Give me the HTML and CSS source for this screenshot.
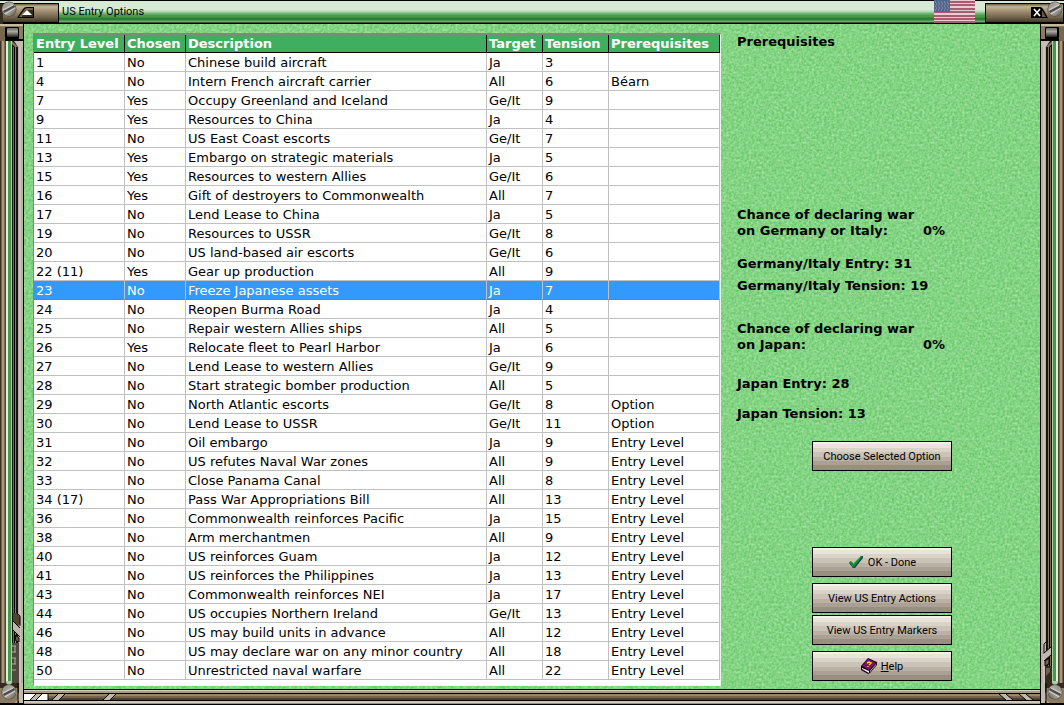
FILE: index.html
```
<!DOCTYPE html>
<html lang="en">
<head>
  <meta charset="UTF-8">
  <meta name="viewport" content="width=device-width, initial-scale=1.0">
  <title>US Entry Options</title>
  <link rel="stylesheet" href="styles.css">
</head>
<body>
  <!-- Shared gradients and the screw head used in every corner -->
  <svg class="defs" width="0" height="0" aria-hidden="true">
    <defs>
      <linearGradient id="bronze" x1="0" y1="0" x2="0" y2="1">
        <stop offset="0" stop-color="#6b5e44"/>
        <stop offset="0.15" stop-color="#c4b496"/>
        <stop offset="0.4" stop-color="#9f8f71"/>
        <stop offset="0.75" stop-color="#6f614a"/>
        <stop offset="1" stop-color="#42382a"/>
      </linearGradient>
      <linearGradient id="steel" x1="0" y1="0" x2="1" y2="1">
        <stop offset="0" stop-color="#8b8780"/>
        <stop offset="0.5" stop-color="#b3b0a9"/>
        <stop offset="1" stop-color="#5d5a54"/>
      </linearGradient>
      <linearGradient id="knob" x1="0" y1="0" x2="0" y2="1">
        <stop offset="0" stop-color="#6d6964"/>
        <stop offset="0.4" stop-color="#aaa6a0"/>
        <stop offset="1" stop-color="#24211e"/>
      </linearGradient>
      <symbol id="screw" viewBox="0 0 16 16">
        <circle cx="8" cy="8" r="7.5" fill="#4a4338"/>
        <circle cx="8" cy="8" r="7" fill="url(#steel)"/>
        <path d="M2 10L13 4L14 6L3 12Z" fill="#4b4a49"/>
        <path d="M2 9L12 4" stroke="#d6d4cf"/>
        <path d="M4 13L14 7" stroke="#d6d4cf"/>
      </symbol>
    </defs>
  </svg>

  <div class="window">
    <header class="titlebar">
      <button class="corner" aria-label="Roll up">
        <svg width="59" height="24" viewBox="0 0 59 24">
          <rect width="59" height="24" fill="#000"/>
          <rect y="1" width="59" height="2" fill="#d3e8d3"/>
          <rect x="1" y="4" width="57" height="18" fill="url(#bronze)"/>
          <rect x="0" y="4" width="3" height="20" fill="#372e20"/>
          <path d="M17 18L23 9Q24 7 27 7H34V18Z" fill="#000"/>
          <path d="M19 17L24 10Q25 8 27 8H33V17Z" fill="#77684f"/>
          <path d="M22 16L25 11Q26 10 28 10H33V17H22Z" fill="#352b1e"/>
          <path d="M22 15L27 10L32 15Z" fill="#fff"/>
          <use href="#screw" x="1" y="1" width="16" height="16"/>
        </svg>
      </button>
      <h1>US Entry Options</h1>
      <svg class="flag" width="41" height="23" viewBox="0 0 41 23" role="img" aria-label="United States">
        <rect width="41" height="23" fill="#e5cdd2"/>
        <path d="M0 2H41M0 5H41M0 9H41M0 12H41M0 16H41M0 19H41M0 22H41" stroke="#a95b70" stroke-width="2"/>
        <rect width="16" height="12" fill="#52658c"/>
        <path d="M1 2H16M1 6H16M1 10H16" stroke="#9aa9c4" stroke-dasharray="1 2"/>
        <path d="M2 4H16M2 8H16" stroke="#9aa9c4" stroke-dasharray="1 2"/>
      </svg>
      <button class="corner" aria-label="Close">
        <svg width="79" height="24" viewBox="0 0 79 24">
          <rect width="79" height="24" fill="#000"/>
          <rect y="1" width="79" height="2" fill="#d3e8d3"/>
          <rect x="1" y="4" width="77" height="18" fill="url(#bronze)"/>
          <path d="M46 7H55Q57 7 58 9L63 18H46Z" fill="#000"/>
          <path d="M57 10L61 17H57Z" fill="#655740"/>
          <path d="M49 9L55 16M55 9L49 16" stroke="#fff" stroke-width="1.6"/>
          <use href="#screw" x="62" y="1" width="16" height="16"/>
        </svg>
      </button>
    </header>

    <div class="rail rail-left">
      <svg width="24" height="17" viewBox="0 0 24 17">
        <rect width="24" height="17" fill="#000"/>
        <rect width="23" height="15" fill="#8b7b61"/>
        <rect width="23" height="2" fill="#c6b99f"/>
        <path d="M0 3H5V17H0Z" fill="#75664c"/>
        <rect x="5" y="3" width="14" height="12" rx="1" fill="#000"/>
        <rect x="7" y="4" width="11" height="9" rx="1" fill="url(#knob)"/>
      </svg>
      <svg width="24" height="6" viewBox="0 0 24 6">
        <rect x="12" width="12" height="6" fill="#17130e"/>
        <path d="M14 0H23V6H18Z" fill="#c7bdb1"/>
        <path d="M12 0L18 6H15L12 3Z" fill="#877961"/>
      </svg>
      <div class="rail-fill"></div>
      <svg width="24" height="92" viewBox="0 0 24 92">
        <path d="M13 0H17L20 4V11L17 14L13 10Z" fill="#51432f"/>
        <path d="M17 0L20 3V13" fill="none" stroke="#000"/>
        <path d="M13 8L20 15V24L13 17Z" fill="#c0b6a9"/>
        <path d="M13 8L20 15M13 17L20 24" stroke="#000"/>
        <path d="M15 22L19 25V29L16 28Z" fill="#75664c" stroke="#000"/>
        <rect x="12" y="30" width="7" height="43" fill="#4f493f"/>
        <path d="M12 33H16M12 39H16M12 45H16M12 51H16M12 57H16" stroke="#b5ab9b" stroke-width="1"/>
        <path d="M15 33V39M15 45V51" stroke="#b5ab9b"/>
        <path d="M0 70H19V92H0Z" fill="#342b1e"/>
        <path d="M6 68H12V70Q9 74 6 70Z" fill="#aacda9"/>
        <path d="M0 75H18V92H0Z" fill="#8b7b61"/>
        <path d="M14 77L19 82V86L15 91" fill="none" stroke="#b3a283" stroke-width="2"/>
        <path d="M18 70V92" stroke="#000"/>
        <path d="M19 70H23V92H19Z" fill="#c4bbb0"/>
        <use href="#screw" x="1" y="71" width="16" height="16"/>
        <path d="M0 91H24" stroke="#000" stroke-width="2"/>
      </svg>
    </div>

    <main class="content">
      <div class="grid-box">
        <table class="options">
          <colgroup>
            <col class="col-level"><col class="col-chosen"><col class="col-desc"><col class="col-target"><col class="col-tension"><col class="col-prereq">
          </colgroup>
          <thead>
            <tr><th>Entry Level</th><th>Chosen</th><th>Description</th><th>Target</th><th>Tension</th><th>Prerequisites</th></tr>
          </thead>
          <tbody>
            <tr><td>1</td><td>No</td><td>Chinese build aircraft</td><td>Ja</td><td>3</td><td></td></tr>
            <tr><td>4</td><td>No</td><td>Intern French aircraft carrier</td><td>All</td><td>6</td><td>Béarn</td></tr>
            <tr><td>7</td><td>Yes</td><td>Occupy Greenland and Iceland</td><td>Ge/It</td><td>9</td><td></td></tr>
            <tr><td>9</td><td>Yes</td><td>Resources to China</td><td>Ja</td><td>4</td><td></td></tr>
            <tr><td>11</td><td>No</td><td>US East Coast escorts</td><td>Ge/It</td><td>7</td><td></td></tr>
            <tr><td>13</td><td>Yes</td><td>Embargo on strategic materials</td><td>Ja</td><td>5</td><td></td></tr>
            <tr><td>15</td><td>Yes</td><td>Resources to western Allies</td><td>Ge/It</td><td>6</td><td></td></tr>
            <tr><td>16</td><td>Yes</td><td>Gift of destroyers to Commonwealth</td><td>All</td><td>7</td><td></td></tr>
            <tr><td>17</td><td>No</td><td>Lend Lease to China</td><td>Ja</td><td>5</td><td></td></tr>
            <tr><td>19</td><td>No</td><td>Resources to USSR</td><td>Ge/It</td><td>8</td><td></td></tr>
            <tr><td>20</td><td>No</td><td>US land-based air escorts</td><td>Ge/It</td><td>6</td><td></td></tr>
            <tr><td>22 (11)</td><td>Yes</td><td>Gear up production</td><td>All</td><td>9</td><td></td></tr>
            <tr class="selected" aria-selected="true"><td>23</td><td>No</td><td>Freeze Japanese assets</td><td>Ja</td><td>7</td><td></td></tr>
            <tr><td>24</td><td>No</td><td>Reopen Burma Road</td><td>Ja</td><td>4</td><td></td></tr>
            <tr><td>25</td><td>No</td><td>Repair western Allies ships</td><td>All</td><td>5</td><td></td></tr>
            <tr><td>26</td><td>Yes</td><td>Relocate fleet to Pearl Harbor</td><td>Ja</td><td>6</td><td></td></tr>
            <tr><td>27</td><td>No</td><td>Lend Lease to western Allies</td><td>Ge/It</td><td>9</td><td></td></tr>
            <tr><td>28</td><td>No</td><td>Start strategic bomber production</td><td>All</td><td>5</td><td></td></tr>
            <tr><td>29</td><td>No</td><td>North Atlantic escorts</td><td>Ge/It</td><td>8</td><td>Option</td></tr>
            <tr><td>30</td><td>No</td><td>Lend Lease to USSR</td><td>Ge/It</td><td>11</td><td>Option</td></tr>
            <tr><td>31</td><td>No</td><td>Oil embargo</td><td>Ja</td><td>9</td><td>Entry Level</td></tr>
            <tr><td>32</td><td>No</td><td>US refutes Naval War zones</td><td>All</td><td>9</td><td>Entry Level</td></tr>
            <tr><td>33</td><td>No</td><td>Close Panama Canal</td><td>All</td><td>8</td><td>Entry Level</td></tr>
            <tr><td>34 (17)</td><td>No</td><td>Pass War Appropriations Bill</td><td>All</td><td>13</td><td>Entry Level</td></tr>
            <tr><td>36</td><td>No</td><td>Commonwealth reinforces Pacific</td><td>Ja</td><td>15</td><td>Entry Level</td></tr>
            <tr><td>38</td><td>No</td><td>Arm merchantmen</td><td>All</td><td>9</td><td>Entry Level</td></tr>
            <tr><td>40</td><td>No</td><td>US reinforces Guam</td><td>Ja</td><td>12</td><td>Entry Level</td></tr>
            <tr><td>41</td><td>No</td><td>US reinforces the Philippines</td><td>Ja</td><td>13</td><td>Entry Level</td></tr>
            <tr><td>43</td><td>No</td><td>Commonwealth reinforces NEI</td><td>Ja</td><td>17</td><td>Entry Level</td></tr>
            <tr><td>44</td><td>No</td><td>US occupies Northern Ireland</td><td>Ge/It</td><td>13</td><td>Entry Level</td></tr>
            <tr><td>46</td><td>No</td><td>US may build units in advance</td><td>All</td><td>12</td><td>Entry Level</td></tr>
            <tr><td>48</td><td>No</td><td>US may declare war on any minor country</td><td>All</td><td>18</td><td>Entry Level</td></tr>
            <tr><td>50</td><td>No</td><td>Unrestricted naval warfare</td><td>All</td><td>22</td><td>Entry Level</td></tr>
          </tbody>
        </table>
      </div>

      <aside class="panel">
        <h2 class="prereq">Prerequisites</h2>

        <section class="germany">
          <p class="chance"><span>Chance of declaring war<br>on Germany or Italy:</span><span class="percent">0%</span></p>
          <p>Germany/Italy Entry: 31</p>
          <p>Germany/Italy Tension: 19</p>
        </section>

        <section class="japan">
          <p class="chance"><span>Chance of declaring war<br>on Japan:</span><span class="percent">0%</span></p>
          <p>Japan Entry: 28</p>
          <p>Japan Tension: 13</p>
        </section>

        <button class="btn">Choose Selected Option</button>

        <div class="actions">
          <button class="btn">
            <svg width="16" height="14" viewBox="0 0 16 14" aria-hidden="true">
              <path d="M1 8L4 7L6 10L13 1H15V3L7 13H5Z" fill="#123c6a"/>
              <path d="M1 7L3 6L5 9L13 1L14 2L6 12H5Z" fill="#0a9a1c"/>
            </svg>
            OK - Done
          </button>
          <div class="views">
            <button class="btn">View US Entry Actions</button>
            <button class="btn">View US Entry Markers</button>
          </div>
          <button class="btn">
            <svg width="16" height="16" viewBox="0 0 16 16" aria-hidden="true">
              <path d="M0 8L7 0L16 4V7L9 15L7 16L0 12Z" fill="#1a0518"/>
              <path d="M1 8L7 1L15 5L8 12Z" fill="#7c1070"/>
              <path d="M1 10L8 13V15L1 11Z" fill="#f1eef1"/>
              <path d="M9 13L15 6V7L9 14Z" fill="#d4c8d4"/>
              <path d="M6 5L8 4L10 5L8 7M7 8V9" fill="none" stroke="#ffd23c" stroke-width="1.4"/>
            </svg>
            <span><u>H</u>elp</span>
          </button>
        </div>
      </aside>
    </main>

    <div class="rail rail-right">
      <svg width="24" height="17" viewBox="0 0 24 17">
        <rect width="24" height="17" fill="#000"/>
        <rect width="23" height="15" fill="#8b7b61"/>
        <rect width="23" height="2" fill="#c6b99f"/>
        <path d="M0 3H5V17H0Z" fill="#75664c"/>
        <rect x="5" y="3" width="14" height="12" rx="1" fill="#000"/>
        <rect x="7" y="4" width="11" height="9" rx="1" fill="url(#knob)"/>
      </svg>
      <svg width="24" height="6" viewBox="0 0 24 6">
        <rect x="12" width="12" height="6" fill="#17130e"/>
        <path d="M14 0H23V6H18Z" fill="#c7bdb1"/>
        <path d="M12 0L18 6H15L12 3Z" fill="#877961"/>
      </svg>
      <div class="rail-fill"></div>
      <svg width="24" height="64" viewBox="0 0 24 64">
        <path d="M17 0L20 3V13" fill="none" stroke="#000"/>
        <path d="M13 6L20 12V20L13 14Z" fill="#c0b6a9"/>
        <path d="M13 6L20 12M13 14L20 20" stroke="#000"/>
        <path d="M15 17L19 20V25L15 23Z" fill="#75664c" stroke="#000"/>
        <rect x="12" y="25" width="7" height="20" fill="#342b1e"/>
        <path d="M14 27H18V35L14 31Z" fill="#6d6250"/>
        <path d="M0 42H19V64H0Z" fill="#342b1e"/>
        <path d="M6 40H12V42Q9 46 6 42Z" fill="#aacda9"/>
        <path d="M0 47H18V64H0Z" fill="#8b7b61"/>
        <path d="M14 49L19 54V58L15 63" fill="none" stroke="#b3a283" stroke-width="2"/>
        <path d="M18 42V64" stroke="#000"/>
        <path d="M19 42H23V64H19Z" fill="#c4bbb0"/>
        <use href="#screw" x="1" y="43" width="16" height="16"/>
        <path d="M0 63H24" stroke="#000" stroke-width="2"/>
      </svg>
    </div>

    <footer class="bottom">
      <svg width="96" height="16" viewBox="0 0 96 16" aria-hidden="true">
        <path d="M0 5H12L6 11H0Z" fill="#fff"/>
        <path d="M18 5H24V11H12Z" fill="#fff"/>
        <path d="M12 5H18L12 11H6Z" fill="#c0b6a9"/>
        <path d="M12 5L6 11M18 5L12 11M24 5V11" stroke="#000"/>
        <path d="M34 5H41L35 11H28Z" fill="#c0b6a9"/>
        <path d="M34 5L28 11M41 5L35 11" stroke="#000"/>
        <path d="M85 5H92L86 11H79Z" fill="#c0b6a9"/>
        <path d="M85 5L79 11M92 5L86 11" stroke="#000"/>
      </svg>
      <svg width="48" height="16" viewBox="0 0 48 16" aria-hidden="true">
        <path d="M7 5H14L21 11H14Z" fill="#c0b6a9"/>
        <path d="M7 5L14 11M14 5L21 11" stroke="#000"/>
        <path d="M27 5H34L41 11H34Z" fill="#c0b6a9"/>
        <path d="M27 5L34 11M34 5L41 11" stroke="#000"/>
      </svg>
    </footer>
  </div>
</body>
</html>
```
FILE: styles.css
```
/* Basic Reset */
* {
  box-sizing: border-box;
  margin: 0;
  padding: 0;
}
body {
  background-color: #000;
  color: #000;
  font-family: Verdana, "DejaVu Sans", sans-serif;
  font-size: 13px;
}
svg {
  display: block;
  flex: none;
}
.defs {
  position: absolute;
}
/* Window Frame */
.window {
  display: grid;
  grid-template-columns: 24px 1fr 24px;
  grid-template-rows: 24px 1fr 16px;
  min-height: 100vh;
}
.titlebar {
  grid-column: 1 / -1;
  display: flex;
  background: linear-gradient(#000 0 1px, #d6ead6 1px 10px, #b4d8b3 11px 12px, #73b674 13px 14px, #499b4b 15px 17px, #2c7f30 18px 20px, #6fab70 21px 22px, #000 23px);
}
.titlebar h1 {
  flex: 1;
  padding-left: 3px;
  font: 11px/24px Roboto, sans-serif;
}
.corner {
  border: none;
  background: none;
  cursor: pointer;
}
.flag {
  margin-right: 10px;
}
.rail {
  grid-row: 2 / 4;
  display: flex;
  flex-direction: column;
  background: linear-gradient(90deg, #3b3020 0 1px, #766548 1px 2px, #a8977a 2px 4px, #7a6a50 4px 5px, #54462f 5px 6px, #e2eee0 6px 8px, #449a49 8px 11px, #a9cda8 11px 12px, #15120d 12px 13px, #786a53 13px 14px, #000 14px 15px, #8b7c64 15px 16px, #17130e 16px 18px, #b9afa5 18px 19px, #cbc2b8 19px 21px, #b9afa5 21px 23px, #000 23px);
}
.rail-right {
  grid-column: 3;
  transform: scaleX(-1);
}
.rail-fill {
  flex: 1;
}
.bottom {
  grid-column: 2;
  display: flex;
  justify-content: space-between;
  background: linear-gradient(#000 0 1px, #d2cec0 1px 2px, #a59c8d 2px 4px, #000 4px 5px, #99876d 5px 7px, #75654f 7px 9px, #4a3e30 9px 11px, #000 11px 12px, #cfc8bc 12px 14px, #9b9182 14px 15px, #000 15px);
}
/* Green Content Area */
.content {
  grid-column: 2;
  display: flex;
  padding: 9px 9px 3px;
  background: #85d485 url("data:image/svg+xml,%3Csvg xmlns='http://www.w3.org/2000/svg' width='128' height='128'%3E%3Cfilter id='n' x='0' y='0' width='100%25' height='100%25' color-interpolation-filters='sRGB'%3E%3CfeTurbulence type='fractalNoise' baseFrequency='0.4' numOctaves='2' stitchTiles='stitch'/%3E%3CfeColorMatrix values='0.35 0 0 0 0.34 0.2 0 0 0 0.73 0.35 0 0 0 0.34 0 0 0 0 1'/%3E%3C/filter%3E%3Crect width='128' height='128' filter='url(%23n)'/%3E%3C/svg%3E");
}
/* Options Table */
.grid-box {
  flex: 0 1 688px;
  padding-bottom: 4px;
  background-color: #fff;
  border: 2px solid;
  border-width: 2px 1px 1px;
  border-color: #7d8a7d #f0f5f0 #f0f5f0 #7d8a7d;
}
.options {
  width: 100%;
  table-layout: fixed;
  border-collapse: separate;
  border-spacing: 0;
}
.col-level {
  width: 91px;
}
.col-chosen {
  width: 61px;
}
.col-target {
  width: 56px;
}
.col-tension {
  width: 66px;
}
.col-prereq {
  width: 111px;
}
.options th {
  height: 18px;
  padding-left: 2px;
  background-color: #3fae60;
  border-right: 1px solid #000;
  border-bottom: 1px solid #000;
  color: #fff;
  font-size: 13px;
  line-height: 16px;
  text-align: left;
  white-space: nowrap;
}
.options td {
  height: 19px;
  padding: 2px 0 0 2px;
  border-right: 1px solid #c0c0c0;
  border-bottom: 1px solid #c0c0c0;
  line-height: 16px;
  white-space: nowrap;
}
.options .selected td {
  background-color: #3399ff;
  border-bottom: 1px dotted #a06a30;
  color: #fff;
}
/* Side Panel */
.panel {
  flex: 1;
  padding-top: 1px;
  padding-left: 16px;
  font-weight: bold;
  line-height: 16px;
}
.prereq {
  min-height: 173px;
  font-size: 13px;
}
.chance {
  display: flex;
  align-items: flex-end;
  width: 208px;
  white-space: nowrap;
}
.percent {
  margin-left: auto;
}
.germany {
  display: grid;
  gap: 6px;
}
.germany .chance {
  margin-bottom: 11px;
}
.japan {
  display: grid;
  gap: 14px;
  margin: 27px 0 19px;
}
.japan .chance {
  margin-bottom: 9px;
}
/* Button Styles */
.btn {
  display: flex;
  justify-content: center;
  align-items: center;
  gap: 4px;
  width: 140px;
  height: 30px;
  margin-left: 75px;
  border: 1px solid #000;
  background: linear-gradient(#f4f1e9 0 2px, #e9e4da 2px 6px, #dad3c8 6px 10px, #cbc3b7 10px 15px, #bbb2a5 15px 19px, #aaa093 19px 23px, #998f81 23px);
  font: 11px Roboto, sans-serif;
  cursor: pointer;
}
.actions {
  display: grid;
  gap: 6px;
  margin-top: 76px;
}
.views {
  display: grid;
  gap: 2px;
}
```
